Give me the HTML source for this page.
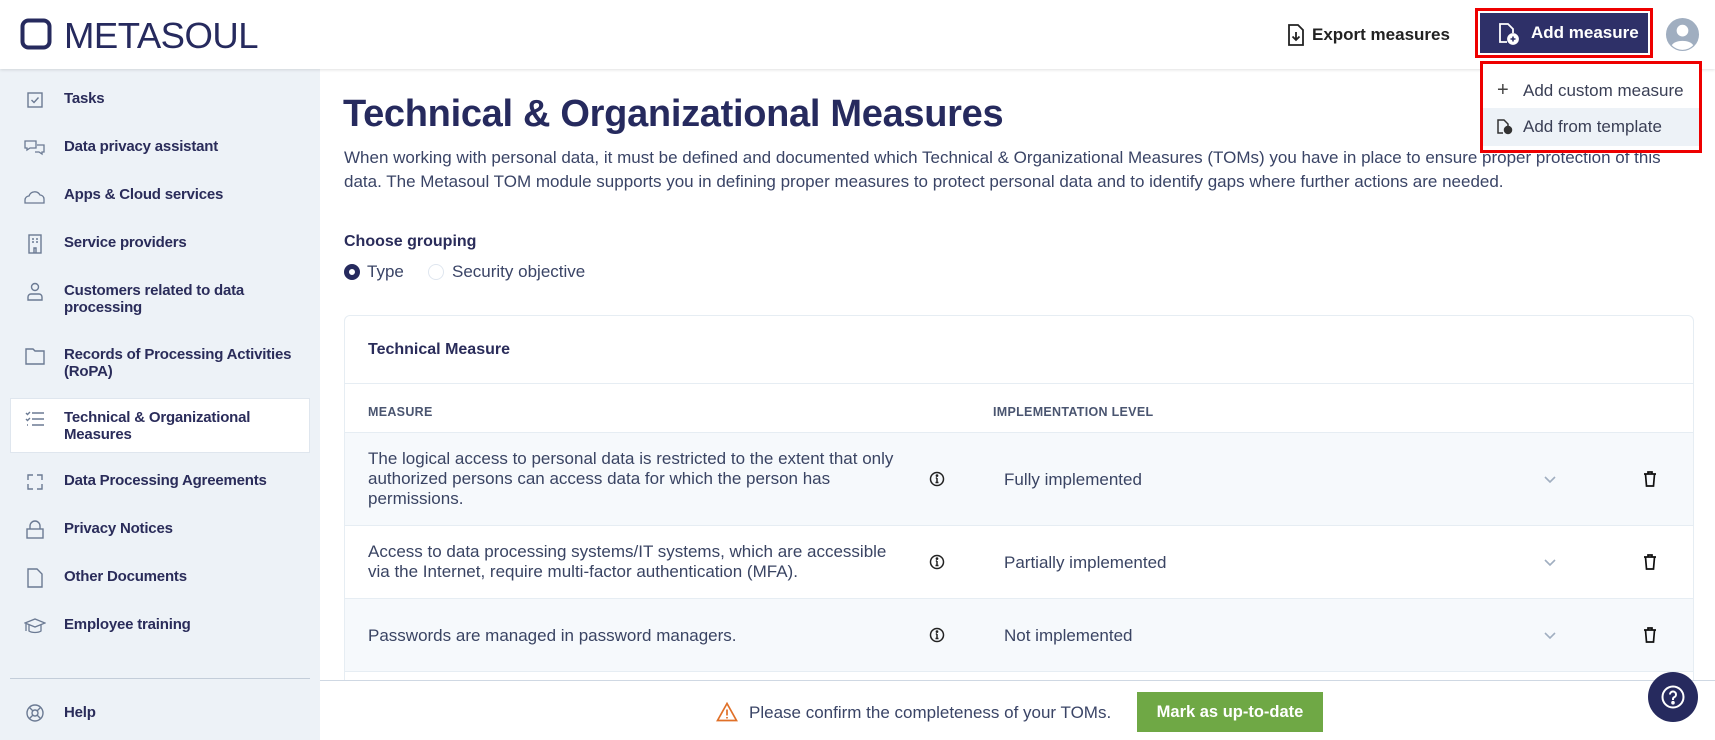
<!DOCTYPE html>
<html><head><meta charset="utf-8"><style>
*{box-sizing:border-box;margin:0;padding:0}
body{width:1715px;height:740px;overflow:hidden;font-family:"Liberation Sans",sans-serif;color:#2a2c5a;background:#fff;position:relative}
.abs{position:absolute}
.hdr{left:0;top:0;width:1715px;height:69px;background:#fff;box-shadow:0 1px 3px rgba(0,0,0,.12);z-index:5}
.side{left:0;top:69px;width:320px;height:671px;background:#edf2f7}
.si{position:absolute;left:64px;font-size:15px;font-weight:bold;line-height:17px;color:#2a2c5a;letter-spacing:-.2px}
.ic{position:absolute;left:24px;width:22px;height:22px}
.main{color:#2a2c5a}
.row{position:absolute;left:345px;width:1348px;border-top:1px solid #e6edf3}
.txt{position:absolute;left:23px;font-size:17px;line-height:20px;color:#3a4463;white-space:nowrap}
.lvl{position:absolute;left:659px;font-size:17px;color:#3a4463}
</style></head><body>
<div class="abs hdr">
  <svg class="abs" style="left:20px;top:18px" width="32" height="32" viewBox="0 0 32 32"><rect x="2.5" y="2.5" width="27" height="27" rx="6" fill="none" stroke="#262a5e" stroke-width="4"/></svg>
  <div class="abs" style="left:64px;top:15px;font-size:36.5px;color:#262a5e;letter-spacing:-.5px">METASOUL</div>
  <svg class="abs" style="left:1287px;top:24px" width="18" height="22" viewBox="0 0 18 22" fill="none" stroke="#222" stroke-width="1.8"><path d="M2 1h9l5 5v15H2z"/><path d="M9 8v8M5.5 12.5L9 16l3.5-3.5"/></svg>
  <div class="abs" style="left:1312px;top:25px;font-size:17px;font-weight:bold;color:#222">Export measures</div>
  <div class="abs" style="left:1475px;top:8px;width:178px;height:50px;border:3px solid #e00;padding:2px"><div style="background:#2e3068;width:100%;height:100%;color:#fff;font-weight:bold;font-size:17px;line-height:40px;padding-left:51px;position:relative">Add measure
  <svg style="position:absolute;left:17px;top:9px" width="24" height="24" viewBox="0 0 24 24" fill="none" stroke="#fff" stroke-width="1.8"><path d="M10 20H3V2h8l5 5v4"/><circle cx="16" cy="17" r="5" fill="#fff"/><path d="M16 14.5v5M13.5 17h5" stroke="#2e3068" stroke-width="1.6"/></svg></div></div>
  <svg class="abs" style="left:1665px;top:17px" width="35" height="35" viewBox="0 0 36 36"><circle cx="18" cy="18" r="17" fill="#a0aec0"/><circle cx="18" cy="14" r="6" fill="#fff"/><path d="M7 29c3-6 19-6 22 0a15 15 0 0 1-22 0z" fill="#fff"/></svg>
</div>
<div class="abs" style="left:1480px;top:61px;width:222px;height:92px;border:3px solid #e00;background:#fff;z-index:6">
  <div style="position:absolute;left:0;top:44px;width:216px;height:38px;background:#edf2f7"></div>
  <div style="position:absolute;left:14px;top:15px;font-size:20px;color:#444">+</div>
  <div style="position:absolute;left:40px;top:17px;font-size:17px;color:#3a3f55">Add custom measure</div>
  <svg style="position:absolute;left:13px;top:55px" width="18" height="16" viewBox="0 0 18 16" fill="none" stroke="#333" stroke-width="1.5"><path d="M7 14H2V1h6l4 4v2"/><circle cx="12" cy="11" r="3.5" fill="#333"/></svg>
  <div style="position:absolute;left:40px;top:53px;font-size:17px;color:#3a3f55">Add from template</div>
</div>

<div class="abs side">
  <svg class="ic" style="top:20px" viewBox="0 0 22 22" fill="none" stroke="#6b7a93" stroke-width="1.4"><rect x="4" y="4" width="14" height="14"/><path d="M7.5 11l2.5 2.5 4.5-5"/></svg>
  <div class="si" style="top:21px">Tasks</div>
  <svg class="ic" style="top:68px" viewBox="0 0 22 22" fill="none" stroke="#6b7a93" stroke-width="1.3"><path d="M1 4h11v7H6l-3 2v-2H1z"/><path d="M13 8h7v7h-2v2l-3-2h-4"/></svg>
  <div class="si" style="top:69px">Data privacy assistant</div>
  <svg class="ic" style="top:116px" viewBox="0 0 22 22" fill="none" stroke="#6b7a93" stroke-width="1.3"><path d="M1 18v-3a4 4 0 0 1 4-4 6 6 0 0 1 11-1 4 4 0 0 1 4 4v4z"/></svg>
  <div class="si" style="top:117px">Apps &amp; Cloud services</div>
  <svg class="ic" style="top:164px" viewBox="0 0 22 22" fill="none" stroke="#6b7a93" stroke-width="1.4"><rect x="5" y="2" width="12" height="18"/><path d="M8 6h2M12 6h2M8 9h2M12 9h2M10 20v-5h2v5"/></svg>
  <div class="si" style="top:165px">Service providers</div>
  <svg class="ic" style="top:212px" viewBox="0 0 22 22" fill="none" stroke="#6b7a93" stroke-width="1.4"><circle cx="11" cy="6" r="3.5"/><path d="M4 19v-3a3 3 0 0 1 3-3h8a3 3 0 0 1 3 3v3z"/></svg>
  <div class="si" style="top:213px">Customers related to data<br>processing</div>
  <svg class="ic" style="top:276px" viewBox="0 0 22 22" fill="none" stroke="#6b7a93" stroke-width="1.4"><path d="M2 4h7l2 2h9v13H2z"/></svg>
  <div class="si" style="top:277px">Records of Processing Activities<br>(RoPA)</div>
  <div class="abs" style="left:10px;top:329px;width:300px;height:55px;background:#fff;border:1px solid #dfe6ee"></div>
  <svg class="ic" style="top:339px" viewBox="0 0 22 22" fill="none" stroke="#6b7a93" stroke-width="1.4"><path d="M2 5l1.5 1.5L6 4M8 5h12M2 11l1.5 1.5L6 10M8 11h12M3 17h1M8 17h12"/></svg>
  <div class="si" style="top:340px">Technical &amp; Organizational<br>Measures</div>
  <svg class="ic" style="top:402px" viewBox="0 0 22 22" fill="none" stroke="#6b7a93" stroke-width="1.4"><path d="M4 9V4h5M18 13v5h-5M13 4h5v5M9 18H4v-5"/></svg>
  <div class="si" style="top:403px">Data Processing Agreements</div>
  <svg class="ic" style="top:450px" viewBox="0 0 22 22" fill="none" stroke="#6b7a93" stroke-width="1.4"><rect x="3" y="10" width="16" height="9"/><path d="M6 10V7a5 5 0 0 1 10 0v3"/></svg>
  <div class="si" style="top:451px">Privacy Notices</div>
  <svg class="ic" style="top:498px" viewBox="0 0 22 22" fill="none" stroke="#6b7a93" stroke-width="1.4"><path d="M4 2h9l5 5v13H4z"/></svg>
  <div class="si" style="top:499px">Other Documents</div>
  <svg class="ic" style="top:546px" viewBox="0 0 22 22" fill="none" stroke="#6b7a93" stroke-width="1.3"><path d="M1 8l10-4 10 4-10 4z"/><path d="M5 10v6c3 2 9 2 12 0v-6M2 9v7"/></svg>
  <div class="si" style="top:547px">Employee training</div>
  <div class="abs" style="left:10px;top:609px;width:300px;height:1px;background:#c3cdd9"></div>
  <svg class="ic" style="top:633px" viewBox="0 0 22 22" fill="none" stroke="#6b7a93" stroke-width="1.4"><circle cx="11" cy="11" r="8"/><circle cx="11" cy="11" r="3"/><path d="M5 5l4 4M17 5l-4 4M5 17l4-4M17 17l-4-4"/></svg>
  <div class="si" style="top:635px">Help</div>
</div>

<div class="main">
  <div class="abs" style="left:343px;top:93px;font-size:38px;font-weight:bold;color:#262a5e;letter-spacing:-.3px">Technical &amp; Organizational Measures</div>
  <div class="abs" style="left:344px;top:146px;width:1345px;font-size:17px;line-height:24px;color:#3a4466">When working with personal data, it must be defined and documented which Technical &amp; Organizational Measures (TOMs) you have in place to ensure proper protection of this data. The Metasoul TOM module supports you in defining proper measures to protect personal data and to identify gaps where further actions are needed.</div>
  <div class="abs" style="left:344px;top:233px;font-size:16px;font-weight:bold">Choose grouping</div>
  <div class="abs" style="left:344px;top:264px;width:16px;height:16px;border-radius:50%;border:5px solid #262a5e"></div>
  <div class="abs" style="left:367px;top:262px;font-size:17px;color:#3a4466">Type</div>
  <div class="abs" style="left:428px;top:264px;width:16px;height:16px;border-radius:50%;border:1.5px solid #dfe6ef"></div>
  <div class="abs" style="left:452px;top:262px;font-size:17px;color:#3a4466">Security objective</div>

  <div class="abs" style="left:344px;top:315px;width:1350px;height:380px;border:1px solid #e6edf3;border-radius:6px"></div>
  <div class="abs" style="left:368px;top:341px;font-size:16px;font-weight:bold">Technical Measure</div>
  <div class="abs" style="left:345px;top:383px;width:1348px;height:1px;background:#e6edf3"></div>
  <div class="abs" style="left:368px;top:405px;font-size:12.5px;font-weight:bold;color:#4a5570;letter-spacing:.3px">MEASURE</div>
  <div class="abs" style="left:993px;top:405px;font-size:12.5px;font-weight:bold;color:#4a5570;letter-spacing:.3px">IMPLEMENTATION LEVEL</div>

  <div class="row" style="top:432px;height:93px;background:#f6f9fc">
    <div class="txt" style="top:16px">The logical access to personal data is restricted to the extent that only<br>authorized persons can access data for which the person has<br>permissions.</div>
    <div class="lvl" style="top:37px">Fully implemented</div>
  </div>
  <div class="row" style="top:525px;height:73px;background:#fff">
    <div class="txt" style="top:16px">Access to data processing systems/IT systems, which are accessible<br>via the Internet, require multi-factor authentication (MFA).</div>
    <div class="lvl" style="top:27px">Partially implemented</div>
  </div>
  <div class="row" style="top:598px;height:73px;background:#f6f9fc">
    <div class="txt" style="top:27px">Passwords are managed in password managers.</div>
    <div class="lvl" style="top:27px">Not implemented</div>
  </div>
  <div class="row" style="top:671px;height:10px;background:#fff"></div>
  <svg class="abs" style="left:929px;top:471px" width="16" height="16" viewBox="0 0 16 16" fill="none" stroke="#222" stroke-width="1.5"><circle cx="8" cy="8" r="6.5"/><path d="M8 7v4.5M6.5 11.5h3M6.8 7H8"/><circle cx="8" cy="4.6" r=".6" fill="#222"/></svg>
  <svg class="abs" style="left:929px;top:554px" width="16" height="16" viewBox="0 0 16 16" fill="none" stroke="#222" stroke-width="1.5"><circle cx="8" cy="8" r="6.5"/><path d="M8 7v4.5M6.5 11.5h3M6.8 7H8"/><circle cx="8" cy="4.6" r=".6" fill="#222"/></svg>
  <svg class="abs" style="left:929px;top:627px" width="16" height="16" viewBox="0 0 16 16" fill="none" stroke="#222" stroke-width="1.5"><circle cx="8" cy="8" r="6.5"/><path d="M8 7v4.5M6.5 11.5h3M6.8 7H8"/><circle cx="8" cy="4.6" r=".6" fill="#222"/></svg>
  <svg class="abs" style="left:1543px;top:475px" width="14" height="9" viewBox="0 0 14 9" fill="none" stroke="#a0aec0" stroke-width="1.6"><path d="M2 2l5 5 5-5"/></svg>
  <svg class="abs" style="left:1543px;top:558px" width="14" height="9" viewBox="0 0 14 9" fill="none" stroke="#a0aec0" stroke-width="1.6"><path d="M2 2l5 5 5-5"/></svg>
  <svg class="abs" style="left:1543px;top:631px" width="14" height="9" viewBox="0 0 14 9" fill="none" stroke="#a0aec0" stroke-width="1.6"><path d="M2 2l5 5 5-5"/></svg>
  <svg class="abs" style="left:1641px;top:470px" width="18" height="18" viewBox="0 0 18 18" fill="none" stroke="#111" stroke-width="1.7"><path d="M3 4h12M7 4V2h4v2M4.5 4l1 12h7l1-12"/></svg>
  <svg class="abs" style="left:1641px;top:553px" width="18" height="18" viewBox="0 0 18 18" fill="none" stroke="#111" stroke-width="1.7"><path d="M3 4h12M7 4V2h4v2M4.5 4l1 12h7l1-12"/></svg>
  <svg class="abs" style="left:1641px;top:626px" width="18" height="18" viewBox="0 0 18 18" fill="none" stroke="#111" stroke-width="1.7"><path d="M3 4h12M7 4V2h4v2M4.5 4l1 12h7l1-12"/></svg>
</div>

<div class="abs" style="left:320px;top:680px;width:1395px;height:60px;background:#fff;border-top:1px solid #cfd8e3"></div>
<svg class="abs" style="left:716px;top:702px" width="22" height="20" viewBox="0 0 22 20" fill="none" stroke="#e07028" stroke-width="1.7"><path d="M11 1.5L1.5 18.5h19z"/><path d="M11 7.5v6M11 15v1.5"/></svg>
<div class="abs" style="left:749px;top:703px;font-size:17px;color:#3a4466;white-space:nowrap">Please confirm the completeness of your TOMs.</div>
<div class="abs" style="left:1137px;top:692px;width:186px;height:40px;background:#6fa845;color:#fff;font-weight:bold;font-size:16.5px;line-height:40px;text-align:center;white-space:nowrap">Mark as up-to-date</div>
<div class="abs" style="left:1648px;top:672px;width:50px;height:50px;border-radius:50%;background:#262a5e"></div>
<svg class="abs" style="left:1660px;top:684px" width="26" height="26" viewBox="0 0 26 26" fill="none" stroke="#fff" stroke-width="2"><circle cx="13" cy="13" r="10.5"/><path d="M10 10.5a3 3 0 1 1 4 2.8c-.8.4-1 1-1 2v.7"/><circle cx="13" cy="18.7" r=".8" fill="#fff"/></svg>
</body></html>
